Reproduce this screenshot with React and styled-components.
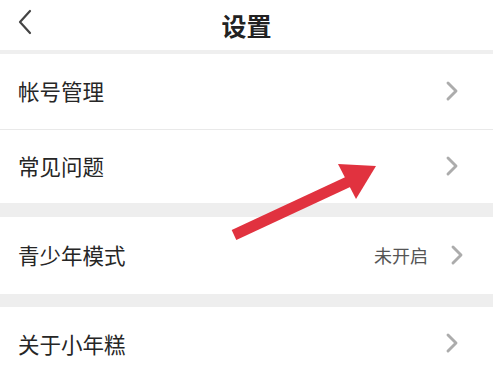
import React from 'react';
import styled, { createGlobalStyle } from 'styled-components';

const GlobalStyle = createGlobalStyle`
  html, body {
    margin: 0;
    padding: 0;
    background: #ffffff;
    font-family: "Noto Sans CJK SC", "Noto Sans", sans-serif;
  }
`;

const Page = styled.div`
  position: relative;
  width: 493px;
  height: 376px;
  overflow: hidden;
  background: #ffffff;
`;

const Header = styled.div`
  position: relative;
  height: 50px;
  display: flex;
  align-items: center;
  justify-content: center;
  border-bottom: 4px solid #efefef;
`;

const BackButton = styled.div`
  position: absolute;
  left: 17px;
  top: 9px;
  width: 20px;
  height: 26px;
  display: flex;
  align-items: center;
`;

const Title = styled.h1`
  margin: 0;
  font-size: 25px;
  font-weight: 700;
  color: #222222;
  letter-spacing: 0;
`;

const Group = styled.div`
  background: #ffffff;
`;

const Gap = styled.div`
  height: ${p => p.h}px;
  background: #eeeeee;
`;

const Row = styled.div`
  height: ${p => p.h}px;
  display: flex;
  align-items: center;
  padding: 0 ${p => (p.tight ? 29 : 34)}px 2px 18px;
  border-top: ${p => (p.divided ? '1px solid #e9e9e9' : 'none')};
  box-sizing: border-box;
`;

const Label = styled.span`
  flex: 1;
  font-size: 21.5px;
  color: #262626;
`;

const Value = styled.span`
  font-size: 18px;
  color: #555555;
  margin-right: 22px;
`;

const Chevron = () => (
  <svg width="14" height="22" viewBox="0 0 14 22">
    <path d="M3 3 L11 11 L3 19" fill="none" stroke="#acacac" strokeWidth="2.9" strokeLinecap="round" strokeLinejoin="round" />
  </svg>
);

const Overlay = styled.svg`
  position: absolute;
  left: 0;
  top: 0;
  pointer-events: none;
`;

const items = [
  [{ label: '帐号管理', h: 75 }, { label: '常见问题', h: 74 }],
  [{ label: '青少年模式', value: '未开启', h: 77 }],
  [{ label: '关于小年糕', h: 74 }],
];

const gaps = [14, 13];

export default function App() {
  return (
    <Page>
      <GlobalStyle />
      <Header>
        <BackButton>
          <svg width="16" height="26" viewBox="0 0 16 26">
            <path d="M13 2 L3 13 L13 24" fill="none" stroke="#444444" strokeWidth="2.2" strokeLinecap="round" strokeLinejoin="round" />
          </svg>
        </BackButton>
        <Title>设置</Title>
      </Header>
      {items.map((group, gi) => (
        <React.Fragment key={gi}>
          <Group>
            {group.map((it, i) => (
              <Row key={it.label} h={it.h} divided={i > 0} tight={!!it.value}>
                <Label>{it.label}</Label>
                {it.value && <Value>{it.value}</Value>}
                <Chevron />
              </Row>
            ))}
          </Group>
          {gi < gaps.length && <Gap h={gaps[gi]} />}
        </React.Fragment>
      ))}
      <Overlay width="493" height="376" viewBox="0 0 493 376">
        <line x1="234" y1="235" x2="350" y2="181" stroke="#e1323f" strokeWidth="11" />
        <polygon points="376,166 338,164 356,199" fill="#e1323f" />
      </Overlay>
    </Page>
  );
}
